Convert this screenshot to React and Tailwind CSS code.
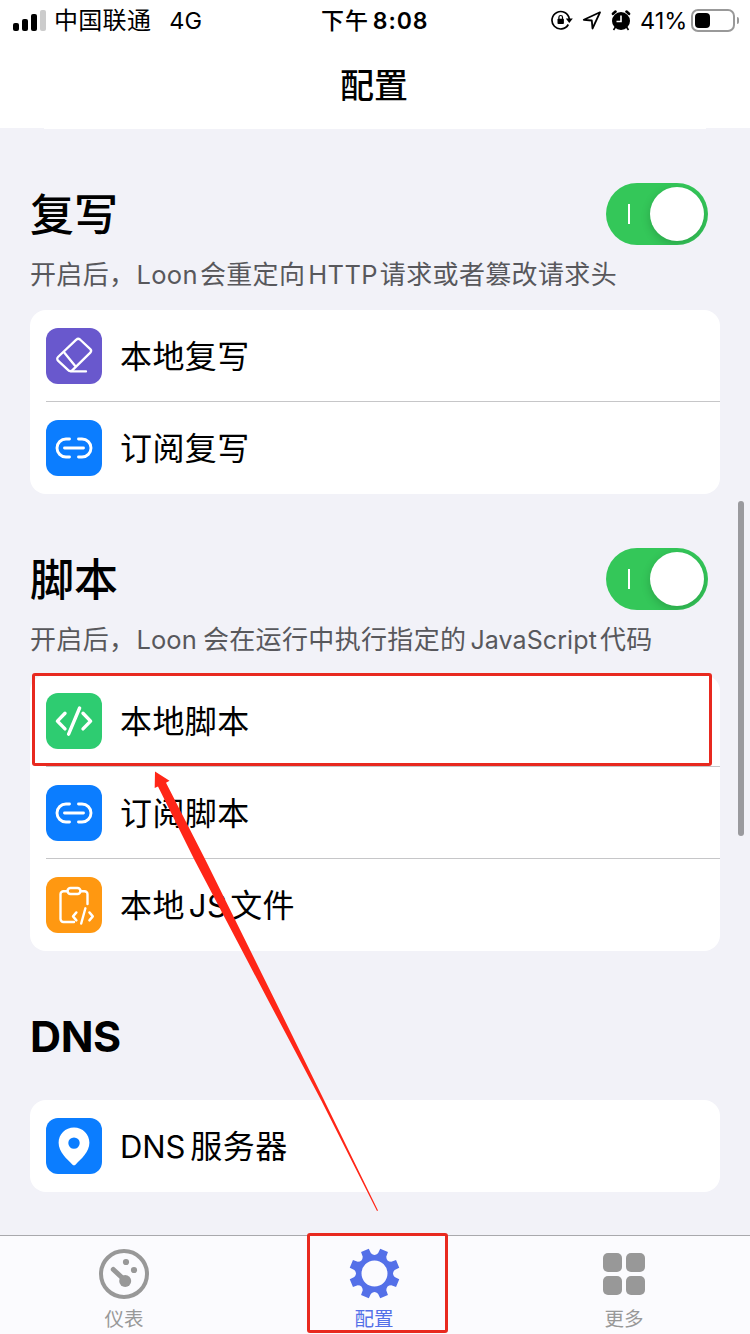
const FONT = "font-['Inter','Noto_Sans_CJK_SC',sans-serif]";

function EraserIcon() {
  return (
    <svg viewBox="0 0 56 56" className="size-14 fill-none stroke-white" strokeWidth="2.3" strokeLinecap="round" strokeLinejoin="round">
      <path d="M30.300 11.700 12 29a2.500 2.500 0 0 0 0 3.600L22.200 42.200a3 3 0 0 0 4.300-.1L44.300 24.600a2.500 2.500 0 0 0 0-3.500L34 11.500a2.700 2.700 0 0 0-3.700.2Z" />
      <path d="m18.200 24.500 10.800 13.300M25 43.400h15" />
    </svg>
  );
}

function LinkIcon() {
  return (
    <svg viewBox="0 0 56 56" className="size-14 fill-none stroke-white" strokeWidth="2.9" strokeLinecap="round">
      <path d="M23.500 19H20a9 9 0 0 0 0 18h3.500M32.500 19H36a9 9 0 0 1 0 18h-3.500M18.500 28h19" />
    </svg>
  );
}

function CodeIcon() {
  return (
    <svg viewBox="0 0 56 56" className="size-14 fill-none stroke-white" strokeWidth="3.4" strokeLinecap="round" strokeLinejoin="round">
      <path d="m19 20.300-7.600 7.800 7.600 7.800M33.600 15 22.600 41.200M37 20.300l7.600 7.800-7.600 7.800" />
    </svg>
  );
}

function ClipboardCodeIcon() {
  return (
    <svg viewBox="0 0 56 56" className="size-14 fill-none stroke-white" strokeWidth="2.4" strokeLinecap="round" strokeLinejoin="round">
      <path d="M21.500 14.300h-4a3 3 0 0 0-3 3V42a3 3 0 0 0 3 3H28M34.500 14.300h4a3 3 0 0 1 3 3V27" />
      <rect x="21.500" y="11" width="13" height="6" rx="3" />
      <path d="m30.400 35.400-3.400 4 3.400 4M39.400 31.300l-4.200 15.200M43.400 35.400l3.400 4-3.400 4" />
    </svg>
  );
}

function PinIcon() {
  return (
    <svg viewBox="0 0 56 56" className="size-14 fill-white">
      <path fillRule="evenodd" d="M28 9.500c8.700 0 15.400 6.800 15.400 15.300 0 9.200-8.400 16.400-13.700 21.600a2.400 2.400 0 0 1-3.400 0C21 41.200 12.600 34 12.600 24.800 12.600 16.300 19.300 9.500 28 9.500Zm0 9.900a5.700 5.700 0 1 0 0 11.400 5.700 5.700 0 0 0 0-11.400Z" />
    </svg>
  );
}

function GaugeIcon() {
  return (
    <svg viewBox="-25 -25 50 50" className="size-[50px] fill-[#989898] stroke-[#989898]">
      <circle r="23" fill="none" strokeWidth="4" />
      <path d="M-10.700-4.500 0 5.500" strokeWidth="5" strokeLinecap="round" />
      <circle cx="1.200" cy="7" r="6" stroke="none" />
      <circle cx="2" cy="-12" r="3.100" stroke="none" />
      <circle cx="10" cy="-4" r="3.100" stroke="none" />
    </svg>
  );
}

function GearIcon() {
  const point = (deg, r) => {
    const a = (deg * Math.PI) / 180;
    return `${(r * Math.sin(a)).toFixed(2)} ${(-r * Math.cos(a)).toFixed(2)}`;
  };
  const d = Array.from({ length: 8 }, (_, k) => {
    const a = k * 45;
    return `${k ? "L" : "M"}${point(a - 13, 25.4)}L${point(a - 10, 20.5)}Q${point(a, 16.8)} ${point(a + 10, 20.5)}L${point(a + 13, 25.4)}L${point(a + 32, 25.4)}`;
  }).join("");
  return (
    <svg viewBox="-25.500 -25.500 51 51" className="size-[51px] fill-[#5470e8]">
      <path fillRule="evenodd" d={`${d}ZM0-13a13 13 0 1 0 0 26a13 13 0 1 0 0-26Z`} />
    </svg>
  );
}

function GridIcon() {
  return (
    <div className="grid size-[50px] grid-cols-[19px_19px] place-content-center gap-1">
      {[0, 1, 2, 3].map((i) => (
        <span key={i} className="size-[19px] rounded-[5px] bg-[#989898]" />
      ))}
    </div>
  );
}

function StatusBar() {
  return (
    <div className="flex h-10 items-center text-black">
      <div className="flex w-[321px] items-center pl-[13px]">
        <div className="flex h-[21px] items-end gap-[3px]">
          <span className="h-2 w-1.5 rounded-[2px] bg-black" />
          <span className="h-3 w-1.5 rounded-[2px] bg-black" />
          <span className="h-[17px] w-1.5 rounded-[2px] bg-black" />
          <span className="h-[21px] w-1.5 rounded-[2px] bg-[#ccc]" />
        </div>
        <span className="ml-2 pt-[2px] text-[24px] leading-10 tracking-[0.3px]">中国联通</span>
        <span className="ml-[18px] pt-[2px] text-[23.5px] leading-10">4G</span>
      </div>
      <div className="flex w-[230px] items-center pt-[2px] text-[23px] font-semibold leading-10 tracking-[0.9px]">
        <span className="font-medium">下午</span>
        <span className="ml-1">8:08</span>
      </div>
      <div className="flex items-center">
        <svg viewBox="0 0 22 20" className="h-5 w-[22px]">
          <path d="M17.300 14.500A8.700 8.700 0 1 1 18.300 9" fill="none" stroke="black" strokeWidth="1.700" />
          <path d="M14.800 8.500h7l-3.500 4.400Z" />
          <rect x="6.500" y="8.800" width="6.400" height="5.200" rx="0.800" />
          <path d="M7.900 9V7.300a1.800 1.800 0 0 1 3.600 0V9" fill="none" stroke="black" strokeWidth="1.200" />
        </svg>
        <svg viewBox="0 0 20 20" className="ml-[9px] size-5 fill-none stroke-black" strokeWidth="1.800" strokeLinejoin="round">
          <path d="M18 2.300 1.800 9.800l8 .7.700 8Z" />
        </svg>
        <svg viewBox="0 0 20 21" className="ml-[9px] h-[21px] w-5">
          <circle cx="10" cy="11" r="9" />
          <path d="M2 3.800 4.500 1.600M18 3.800 15.500 1.600" stroke="black" strokeWidth="2.600" strokeLinecap="round" />
          <path d="m4.500 17-2 3M15.500 17l2 3" stroke="black" strokeWidth="1.600" />
          <path d="M10 5.500V11.500H5.500" fill="none" stroke="white" strokeWidth="1.600" />
        </svg>
        <span className="ml-[9px] w-[46px] whitespace-nowrap pt-[2px] text-[23.5px] leading-10">41%</span>
        <div className="ml-[5px] flex h-[23px] w-11 items-center rounded-[7px] border-2 border-[#999] pl-[2px]">
          <span className="h-[15px] w-[15px] rounded-[4px] bg-black" />
        </div>
        <span className="ml-[2px] h-[7px] w-[2px] rounded-r-full bg-[#999]" />
      </div>
    </div>
  );
}

function Toggle() {
  return (
    <div className="flex h-[62px] w-[102px] items-center justify-between overflow-hidden rounded-full bg-[#34c759] pl-[22px] pr-1">
      <span className="h-5 w-[2px] bg-white" />
      <span className="size-[54px] rounded-full bg-white shadow-[0_3px_10px_rgba(0,0,0,0.18)]" />
    </div>
  );
}

function Section({ title, description, rows, toggle, className }) {
  return (
    <section className={className}>
      <div className="flex h-[62px] items-center justify-between pr-3">
        <h2 className="pt-[2px] text-[44px] leading-[62px]">{title}</h2>
        {toggle && <Toggle />}
      </div>
      {description && <p className="flex h-[65px] whitespace-nowrap text-[26px] leading-[60px] tracking-[0.35px] text-[#58585c]">{description}</p>}
      <ul className={`overflow-hidden rounded-2xl bg-white ${description ? "" : "mt-[33px]"}`}>
        {rows.map((row, i) => (
          <li key={i} className="flex h-[92px] pl-4">
            <div className="flex h-14 w-14 shrink-0 self-center">
              <span className={`size-14 rounded-xl ${row.color}`}>{row.icon}</span>
            </div>
            <div className="relative ml-[18px] flex h-full flex-1 items-center pt-[2px] text-[32px] tracking-[0.4px]">
              {row.label}
              {i < rows.length - 1 && <span className="absolute -left-[74px] bottom-0 right-0 h-px bg-[#c6c6c8]" />}
            </div>
          </li>
        ))}
      </ul>
    </section>
  );
}

const rewriteRows = [
  { icon: <EraserIcon />, color: "bg-[#6958cd]", label: "本地复写" },
  { icon: <LinkIcon />, color: "bg-[#0b7dff]", label: "订阅复写" },
];

const scriptRows = [
  { icon: <CodeIcon />, color: "bg-[#2ecc71]", label: "本地脚本" },
  { icon: <LinkIcon />, color: "bg-[#0b7dff]", label: "订阅脚本" },
  { icon: <ClipboardCodeIcon />, color: "bg-[#ff9811]", label: <>本地<span className="ml-1 mr-[3px] text-[31px]">JS</span>文件</> },
];

const dnsRows = [
  { icon: <PinIcon />, color: "bg-[#0b7dff]", label: <><span className="mr-[5px] text-[31px] tracking-[-0.1px]">DNS</span>服务器</> },
];

function Tab({ icon, label, active }) {
  return (
    <div className={`flex flex-1 flex-col items-center pr-[2px] ${active ? "text-[#5470e8]" : "text-[#989898]"}`}>
      <div className="flex h-[51px] items-center">{icon}</div>
      <span className="mt-[7px] text-[19.5px] leading-[26px]">{label}</span>
    </div>
  );
}

export default function App() {
  return (
    <div className={`relative flex h-[1334px] w-[750px] flex-col overflow-hidden bg-[#f2f2f8] text-black ${FONT}`} lang="zh-CN">
      <header className="h-32 shrink-0 bg-white">
        <StatusBar />
        <h1 className="h-[88px] pr-[2px] pt-[2px] text-center text-[34px] font-medium leading-[88px]">配置</h1>
      </header>
      <main className="h-[1107px] shrink-0 overflow-hidden px-[30px]">
        <div className="mx-[14px] h-px bg-white" />
        <Section
          className="mt-[54px]"
          title={<span className="font-medium">复写</span>}
          toggle
          description={<>开启后，<span className="ml-px mr-[2px] text-[25.5px]">Loon</span>会重定向<span className="ml-[3px] mr-[2px] text-[25.5px]">HTTP</span>请求或者篡改请求头</>}
          rows={rewriteRows}
        />
        <Section
          className="mt-[54px]"
          title={<span className="font-medium">脚本</span>}
          toggle
          description={<>开启后，<span className="ml-px mr-[6px] text-[25.5px] tracking-[0.1px]">Loon</span>会在运行中执行指定的<span className="ml-[4px] mr-[3px] text-[25px] tracking-[0.1px]">JavaScript</span>代码</>}
          rows={scriptRows}
        />
        <Section className="mt-[54px]" title={<span className="relative -top-px text-[43px] font-bold tracking-[-0.4px]">DNS</span>} rows={dnsRows} />
      </main>
      <nav className="flex h-[99px] shrink-0 border-t border-[#a9a9ad] bg-[#fbfbfe] pt-[12px]">
        <Tab icon={<GaugeIcon />} label="仪表" />
        <Tab icon={<GearIcon />} label="配置" active />
        <Tab icon={<GridIcon />} label="更多" />
      </nav>
      <div className="absolute left-[738px] top-[501px] h-[335px] w-1.5 rounded-full bg-[#9a9a9e]" />
      <div className="absolute left-8 top-[673px] h-[93px] w-[680px] rounded-[3px] border-[3px] border-[#e8291f]" />
      <div className="absolute left-[307px] top-[1233px] h-[100px] w-[141px] rounded-[3px] border-[3px] border-[#e8291f]" />
      <svg viewBox="150 765 235 450" className="absolute left-[150px] top-[765px] h-[450px] w-[235px] fill-[#ff2617]">
        <path d="M155 771.500 169.500 780.700 166 782.700 205.500 860 255 960 274.800 1000 324 1100 378 1210.500 377 1211 321 1100 268 1000 247 960 194.500 860 158 786.500 154.700 788Z" />
      </svg>
    </div>
  );
}
